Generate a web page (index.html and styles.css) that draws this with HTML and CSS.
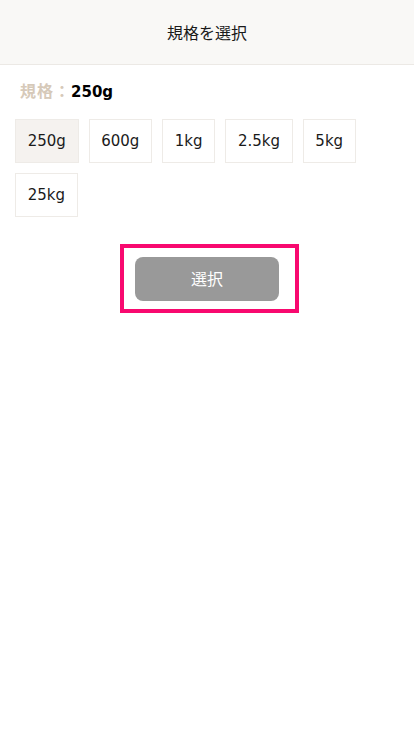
FILE: index.html
```html
<!DOCTYPE html>
<html lang="ja">
<head>
<meta charset="utf-8">
<title>規格を選択</title>
<link rel="stylesheet" href="styles.css">
</head>
<body>
<header class="header">規格を選択</header>
<div class="label"><span class="label-key">規格：</span><span class="label-val">250g</span></div>
<div class="options">
  <div class="opt opt-active">250g</div>
  <div class="opt">600g</div>
  <div class="opt">1kg</div>
  <div class="opt">2.5kg</div>
  <div class="opt">5kg</div>
  <div class="opt">25kg</div>
</div>
<div class="action">
  <div class="frame"><button class="btn">選択</button></div>
</div>
</body>
</html>
```
FILE: styles.css
```css
html, body {
  margin: 0;
  padding: 0;
  background: #ffffff;
  font-family: "DejaVu Sans", "Noto Sans CJK JP", sans-serif;
  color: #111111;
}
.header {
  height: 64px;
  background: #f9f8f6;
  border-bottom: 1px solid #ece9e5;
  display: flex;
  align-items: center;
  justify-content: center;
  font-size: 16px;
  color: #1a1a1a;
}
.label {
  padding: 14px 20px 0 20px;
  height: 26px;
  line-height: 26px;
  font-weight: bold;
}
.label-key {
  color: #d6c9b9;
  font-size: 16px;
  letter-spacing: 1px;
}
.label-val {
  color: #000000;
  font-size: 15px;
}
.options {
  display: flex;
  flex-wrap: wrap;
  gap: 10px;
  padding: 14px 15px 0 15px;
  width: 360px;
}
.opt {
  height: 42px;
  padding: 0 11.7px;
  border: 1px solid #eeebe7;
  display: flex;
  align-items: center;
  font-size: 15px;
  color: #1a1a1a;
  box-sizing: content-box;
}
.opt-active {
  background: #f5f2ef;
}
.action {
  display: flex;
  padding: 27px 0 0 120px;
}
.frame {
  width: 144px;
  border: 4px solid #f8096f;
  padding: 9px 16px 8px 11px;
}
.btn {
  display: block;
  width: 144px;
  height: 44px;
  border: none;
  border-radius: 8px;
  background: #999999;
  color: #ffffff;
  font-family: "DejaVu Sans", "Noto Sans CJK JP", sans-serif;
  font-size: 16px;
  padding: 0 0 2px 0;
}
```
